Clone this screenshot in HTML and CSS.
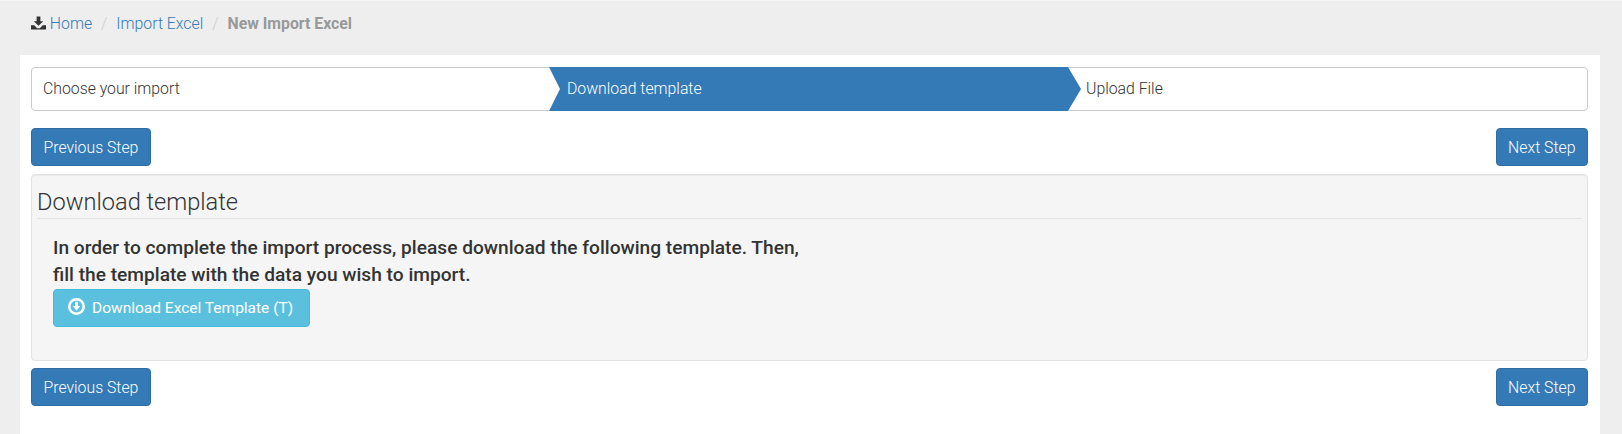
FILE: index.html
```html
<!DOCTYPE html>
<html lang="en">
<head>
  <meta charset="UTF-8"/>
  <title>New Import Excel</title>
  <link rel="stylesheet" href="styles.css">
</head>
<body>
  <ol class="breadcrumb">
    <li>
      <svg class="crumb-icon" viewBox="0 0 16 14"><path d="M6 0h4v5h3l-5 5-5-5h3zM0 9.500h3.500l3 3h3l3-3H16V14H0z"/></svg>
      <a href="#">Home</a>
    </li>
    <li><a href="#">Import Excel</a></li>
    <li class="current">New Import Excel</li>
  </ol>
  <div class="content">
    <div class="steps">
      <div class="step first">Choose your import</div>
      <div class="step active">Download template</div>
      <div class="step last">Upload File</div>
    </div>
    <div class="step-nav">
      <button class="btn">Previous Step</button>
      <button class="btn">Next Step</button>
    </div>
    <div class="well">
      <h3>Download template</h3>
      <div class="well-body">
        <p>In order to complete the import process, please download the following template. Then, fill the template with the data you wish to import.</p>
        <button class="btn-info">
          <svg class="info-icon" viewBox="0 0 16 16"><circle class="ring" cx="8" cy="8" r="6.800"/><path d="M6.700 3.600h2.600v4h2.200L8 11.900 4.500 7.600h2.200z"/></svg>
          Download Excel Template (T)
        </button>
      </div>
    </div>
    <div class="step-nav">
      <button class="btn">Previous Step</button>
      <button class="btn">Next Step</button>
    </div>
  </div>
</body>
</html>
```

FILE: styles.css
```css
*{box-sizing:border-box;}
html,body{margin:0;padding:0;}
body{background:#eee;color:#333;font-family:"Roboto","Liberation Sans",sans-serif;font-size:15.8px;height:434px;overflow:hidden;}
button{font-family:inherit;cursor:pointer;}

.breadcrumb{display:flex;list-style:none;margin:0;padding:13px 0 0 31px;height:55px;line-height:19px;font-weight:300;border-top:1px solid #f5f5f5;}
.breadcrumb li+li::before{content:"/";color:#ccc;padding:0 9px;}
.breadcrumb a{color:#337ab7;text-decoration:none;}
.breadcrumb .current{font-weight:700;color:#999;}
.breadcrumb .current::before{font-weight:300;}
.crumb-icon{width:15px;height:14px;fill:#333;vertical-align:-0.5px;}

.content{background:#fff;margin:0 22px 0 20px;padding:12px 12px 0 11px;height:379px;}

.steps{display:flex;height:44px;border:1px solid #ccc;border-radius:4px;font-weight:300;line-height:42px;}
.step{padding-left:18px;}
.step.first{flex:0 0 517px;padding-left:11px;}
.step.active{flex:0 0 532px;margin:-1px -13px -1px 0;height:44px;line-height:44px;background:#337ab7;color:#fff;clip-path:polygon(0 0,519px 0,100% 50%,519px 100%,0 100%,11px 50%);position:relative;}
.step.last{flex:1;}

.step-nav{display:flex;justify-content:space-between;margin:17px 0 7px;}
.well+.step-nav{margin-top:7px;}
.btn{height:38px;padding:0 11.500px;background:#337ab7;border:1px solid #2e6da4;border-radius:4px;color:#fff;font-size:15.8px;font-weight:300;}

.well{height:187px;margin-top:8px;background:#f5f5f5;border:1px solid #e3e3e3;border-radius:4px;padding:0 5px;box-shadow:inset 0 1px 1px rgba(0,0,0,.05);}
.well h3{margin:0;height:44px;padding-top:13px;border-bottom:1px solid #e3e3e3;font-size:23.6px;font-weight:300;line-height:28px;}
.well-body{padding:15px 0 0 16px;}
.well-body p{margin:0 0 1px;max-width:760px;font-size:19.15px;font-weight:500;line-height:27px;}
.btn-info{display:flex;align-items:center;gap:7px;height:38px;width:257px;padding:0 14px;background:#5bc0de;border:1px solid #46b8da;border-radius:4px;color:#fff;font-size:15.5px;font-weight:400;white-space:nowrap;}
.info-icon{flex:none;width:17px;height:17px;fill:#fff;margin-top:-4px;}
.info-icon .ring{fill:none;stroke:#fff;stroke-width:2.400;}
```
